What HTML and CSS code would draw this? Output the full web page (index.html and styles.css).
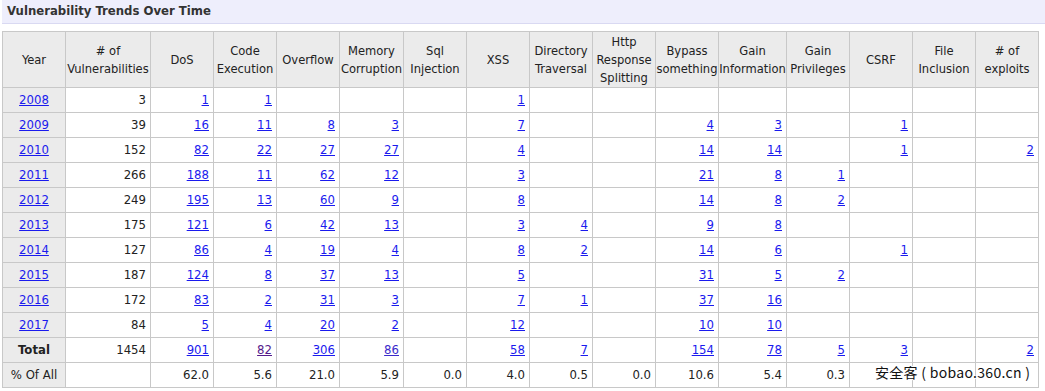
FILE: index.html
```html
<!DOCTYPE html>
<html lang="en">
<head>
<meta charset="utf-8">
<title>Vulnerability Trends Over Time</title>
<link rel="stylesheet" href="styles.css">
</head>
<body>
<div class="page">
  <h2 class="title">Vulnerability Trends Over Time</h2>
  <table class="stats">
    <colgroup>
      <col class="c63"><col class="c85"><col class="c63"><col class="c63"><col class="c63"><col class="c64"><col class="c63"><col class="c63"><col class="c63"><col class="c63"><col class="c63"><col class="c68"><col class="c63"><col class="c63"><col class="c63"><col class="c63">
    </colgroup>
    <thead>
      <tr>
        <th>Year</th><th># of<br>Vulnerabilities</th><th>DoS</th><th>Code<br>Execution</th><th>Overflow</th><th>Memory<br>Corruption</th><th>Sql<br>Injection</th><th>XSS</th><th>Directory<br>Traversal</th><th>Http<br>Response<br>Splitting</th><th>Bypass<br>something</th><th>Gain<br>Information</th><th>Gain<br>Privileges</th><th>CSRF</th><th>File<br>Inclusion</th><th># of<br>exploits</th>
      </tr>
    </thead>
    <tbody>
      <tr><th><a href="#">2008</a></th><td>3</td><td><a href="#">1</a></td><td><a href="#">1</a></td><td></td><td></td><td></td><td><a href="#">1</a></td><td></td><td></td><td></td><td></td><td></td><td></td><td></td><td></td></tr>
      <tr><th><a href="#">2009</a></th><td>39</td><td><a href="#">16</a></td><td><a href="#">11</a></td><td><a href="#">8</a></td><td><a href="#">3</a></td><td></td><td><a href="#">7</a></td><td></td><td></td><td><a href="#">4</a></td><td><a href="#">3</a></td><td></td><td><a href="#">1</a></td><td></td><td></td></tr>
      <tr><th><a href="#">2010</a></th><td>152</td><td><a href="#">82</a></td><td><a href="#">22</a></td><td><a href="#">27</a></td><td><a href="#">27</a></td><td></td><td><a href="#">4</a></td><td></td><td></td><td><a href="#">14</a></td><td><a href="#">14</a></td><td></td><td><a href="#">1</a></td><td></td><td><a href="#">2</a></td></tr>
      <tr><th><a href="#">2011</a></th><td>266</td><td><a href="#">188</a></td><td><a href="#">11</a></td><td><a href="#">62</a></td><td><a href="#">12</a></td><td></td><td><a href="#">3</a></td><td></td><td></td><td><a href="#">21</a></td><td><a href="#">8</a></td><td><a href="#">1</a></td><td></td><td></td><td></td></tr>
      <tr><th><a href="#">2012</a></th><td>249</td><td><a href="#">195</a></td><td><a href="#">13</a></td><td><a href="#">60</a></td><td><a href="#">9</a></td><td></td><td><a href="#">8</a></td><td></td><td></td><td><a href="#">14</a></td><td><a href="#">8</a></td><td><a href="#">2</a></td><td></td><td></td><td></td></tr>
      <tr><th><a href="#">2013</a></th><td>175</td><td><a href="#">121</a></td><td><a href="#">6</a></td><td><a href="#">42</a></td><td><a href="#">13</a></td><td></td><td><a href="#">3</a></td><td><a href="#">4</a></td><td></td><td><a href="#">9</a></td><td><a href="#">8</a></td><td></td><td></td><td></td><td></td></tr>
      <tr><th><a href="#">2014</a></th><td>127</td><td><a href="#">86</a></td><td><a href="#">4</a></td><td><a href="#">19</a></td><td><a href="#">4</a></td><td></td><td><a href="#">8</a></td><td><a href="#">2</a></td><td></td><td><a href="#">14</a></td><td><a href="#">6</a></td><td></td><td><a href="#">1</a></td><td></td><td></td></tr>
      <tr><th><a href="#">2015</a></th><td>187</td><td><a href="#">124</a></td><td><a href="#">8</a></td><td><a href="#">37</a></td><td><a href="#">13</a></td><td></td><td><a href="#">5</a></td><td></td><td></td><td><a href="#">31</a></td><td><a href="#">5</a></td><td><a href="#">2</a></td><td></td><td></td><td></td></tr>
      <tr><th><a href="#">2016</a></th><td>172</td><td><a href="#">83</a></td><td><a href="#">2</a></td><td><a href="#">31</a></td><td><a href="#">3</a></td><td></td><td><a href="#">7</a></td><td><a href="#">1</a></td><td></td><td><a href="#">37</a></td><td><a href="#">16</a></td><td></td><td></td><td></td><td></td></tr>
      <tr><th><a href="#">2017</a></th><td>84</td><td><a href="#">5</a></td><td><a href="#">4</a></td><td><a href="#">20</a></td><td><a href="#">2</a></td><td></td><td><a href="#">12</a></td><td></td><td></td><td><a href="#">10</a></td><td><a href="#">10</a></td><td></td><td></td><td></td><td></td></tr>
      <tr><th class="label">Total</th><td>1454</td><td><a href="#">901</a></td><td><a href="#" class="visited">82</a></td><td><a href="#">306</a></td><td><a href="#" class="visited-2">86</a></td><td></td><td><a href="#">58</a></td><td><a href="#">7</a></td><td></td><td><a href="#">154</a></td><td><a href="#">78</a></td><td><a href="#">5</a></td><td><a href="#">3</a></td><td></td><td><a href="#">2</a></td></tr>
      <tr><th class="label pct">% Of All</th><td></td><td>62.0</td><td>5.6</td><td>21.0</td><td>5.9</td><td>0.0</td><td>4.0</td><td>0.5</td><td>0.0</td><td>10.6</td><td>5.4</td><td>0.3</td><td></td><td></td><td></td></tr>
    </tbody>
  </table>
  <div class="watermark">安全客 ( bobao.360.cn )</div>
</div>
</body>
</html>
```

FILE: styles.css
```css
html, body {
  margin: 0;
  padding: 0;
  background: #ffffff;
}

body {
  font-family: "DejaVu Sans Condensed", "DejaVu Sans", Verdana, sans-serif;
  font-size: 13px;
  color: #222222;
}

.page {
  position: relative;
  padding: 0 0 0 2px;
}

.title {
  margin: 0;
  height: 23px;
  line-height: 21px;
  padding: 0 0 0 5px;
  font-size: 13px;
  font-weight: bold;
  color: #333333;
  background: #eeeefc;
  border-bottom: 1px solid #d9d9f2;
}

.stats {
  margin-top: 7px;
  border-collapse: collapse;
  table-layout: fixed;
  width: 1037px;
  border: 1px solid #c8c8c8;
}

.c63 { width: 63px; }
.c64 { width: 64px; }
.c68 { width: 68px; }
.c85 { width: 85px; }

.stats th,
.stats td {
  border: 1px solid #c8c8c8;
  padding: 0 4px;
  line-height: 18px;
  height: 25px;
  font-weight: normal;
  box-sizing: border-box;
}

.stats thead th {
  background: #ebebeb;
  color: #222222;
  text-align: center;
  vertical-align: middle;
  height: 56px;
  padding: 0;
  font-size: 12.8px;
}

.stats tbody th {
  background: #ebebeb;
  text-align: center;
}

.stats tbody th.label {
  font-weight: bold;
  color: #222222;
}

.stats tbody th.pct {
  font-weight: normal;
}

.stats td {
  text-align: right;
  color: #222222;
}

.stats a {
  color: #1a1aee;
  text-decoration: underline;
}

.stats a.visited {
  color: #551a8b;
}

.stats a.visited-2 {
  color: #3a2acb;
}

.watermark {
  position: absolute;
  left: 875px;
  top: 364px;
  font-family: "Noto Sans CJK SC", "DejaVu Sans", sans-serif;
  font-size: 14px;
  line-height: 16px;
  color: #111111;
  letter-spacing: 0.3px;
  text-shadow: 0 0 2px #ffffff, 0 0 2px #ffffff, 1px 1px 0 #ffffff, -1px -1px 0 #ffffff;
  white-space: nowrap;
}
```
